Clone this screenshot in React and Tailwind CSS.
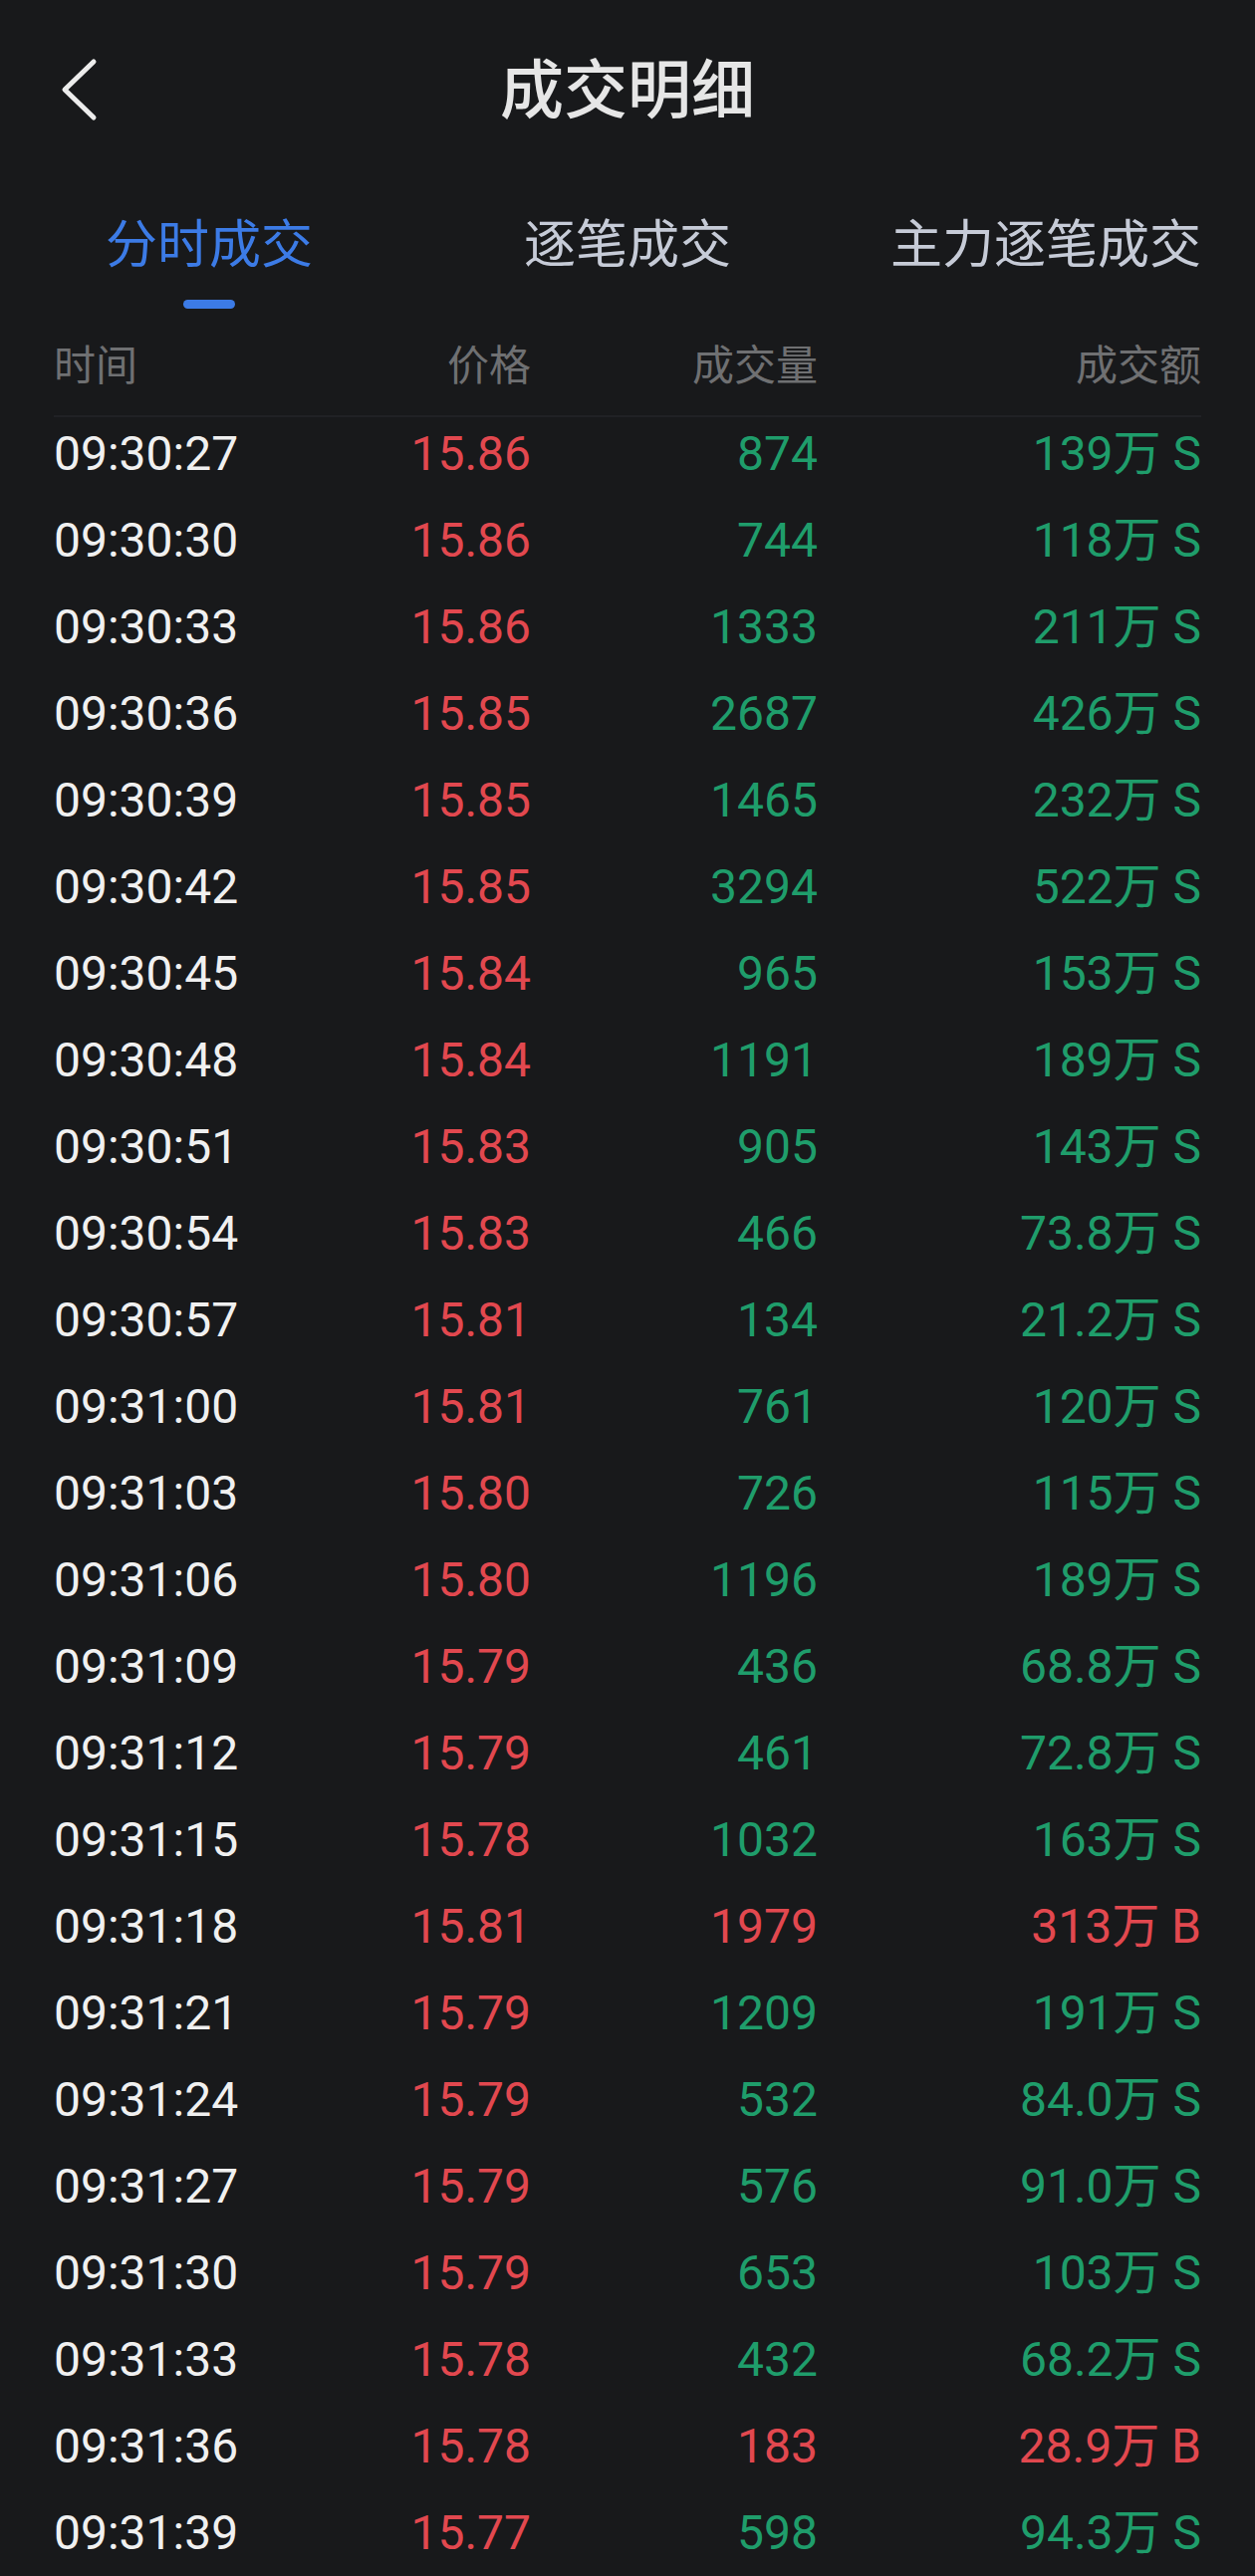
import React from 'react';

const rows = [
    ['09:30:27', '15.86', '874', '139万', 'S'],
    ['09:30:30', '15.86', '744', '118万', 'S'],
    ['09:30:33', '15.86', '1333', '211万', 'S'],
    ['09:30:36', '15.85', '2687', '426万', 'S'],
    ['09:30:39', '15.85', '1465', '232万', 'S'],
    ['09:30:42', '15.85', '3294', '522万', 'S'],
    ['09:30:45', '15.84', '965', '153万', 'S'],
    ['09:30:48', '15.84', '1191', '189万', 'S'],
    ['09:30:51', '15.83', '905', '143万', 'S'],
    ['09:30:54', '15.83', '466', '73.8万', 'S'],
    ['09:30:57', '15.81', '134', '21.2万', 'S'],
    ['09:31:00', '15.81', '761', '120万', 'S'],
    ['09:31:03', '15.80', '726', '115万', 'S'],
    ['09:31:06', '15.80', '1196', '189万', 'S'],
    ['09:31:09', '15.79', '436', '68.8万', 'S'],
    ['09:31:12', '15.79', '461', '72.8万', 'S'],
    ['09:31:15', '15.78', '1032', '163万', 'S'],
    ['09:31:18', '15.81', '1979', '313万', 'B'],
    ['09:31:21', '15.79', '1209', '191万', 'S'],
    ['09:31:24', '15.79', '532', '84.0万', 'S'],
    ['09:31:27', '15.79', '576', '91.0万', 'S'],
    ['09:31:30', '15.79', '653', '103万', 'S'],
    ['09:31:33', '15.78', '432', '68.2万', 'S'],
    ['09:31:36', '15.78', '183', '28.9万', 'B'],
    ['09:31:39', '15.77', '598', '94.3万', 'S'],
];

const tabs = ['分时成交', '逐笔成交', '主力逐笔成交'];

export default function App() {
    return (
        <div className="w-[1260px] min-h-[2587px] bg-[#18191b] font-['Roboto','Noto_Sans_CJK_SC',sans-serif]">
            {/* nav bar */}
            <div className="flex items-center h-[180px] px-[58px]">
                <div className="w-[48px] flex items-center">
                    <svg width="42" height="64" viewBox="0 0 42 64" fill="none">
                        <path d="M36 4 L7 32 L36 60" stroke="#ececec" strokeWidth="5" strokeLinecap="round" strokeLinejoin="round" />
                    </svg>
                </div>
                <h1 className="flex-1 text-center mb-[10px] text-[64px] leading-[80px] font-medium text-[#e6e6e6] font-['Noto_Sans_CJK_SC',sans-serif]">
                    成交明细
                </h1>
                <div className="w-[48px]" />
            </div>

            {/* tabs */}
            <div className="grid grid-cols-3 pt-[32px] h-[130px]">
                {tabs.map((t, i) => (
                    <div key={t} className="flex flex-col items-center">
                        <span
                            className={
                                i === 0
                                    ? "text-[52px] leading-[60px] text-[#3c7be6] font-['Noto_Sans_CJK_SC',sans-serif]"
                                    : "text-[52px] leading-[60px] text-[#c6cbd7] font-['Noto_Sans_CJK_SC',sans-serif]"
                            }
                        >
                            {t}
                        </span>
                        {i === 0 && <div className="mt-[29px] w-[52px] h-[9px] rounded-full bg-[#3c7be6]" />}
                    </div>
                ))}
            </div>

            {/* table */}
            <div className="px-[54px]">
                <div className="grid grid-cols-[200px_279px_288px_1fr] items-center h-[107px] text-[42px] leading-[50px] text-[#6f7072] font-['Noto_Sans_CJK_SC',sans-serif]">
                    <span>时间</span>
                    <span className="text-right">价格</span>
                    <span className="text-right">成交量</span>
                    <span className="text-right">成交额</span>
                </div>
                <div className="h-[2px] bg-[#202125]" />

                {rows.map(([time, price, vol, amt, side]) => {
                    const buy = side === 'B';
                    const tone = buy ? 'text-[#e2484f]' : 'text-[#1f9d6b]';
                    return (
                        <div
                            key={time}
                            className="grid grid-cols-[200px_279px_288px_1fr] items-start h-[87px] pt-[9px] text-[48px] leading-[56px]"
                        >
                            <span className="text-[#f0f0f0]">{time}</span>
                            <span className="text-right text-[#e2484f]">{price}</span>
                            <span className={`text-right ${tone}`}>{vol}</span>
                            <span className={`text-right ${tone}`}>
                                {amt} {side}
                            </span>
                        </div>
                    );
                })}
            </div>
        </div>
    );
}
